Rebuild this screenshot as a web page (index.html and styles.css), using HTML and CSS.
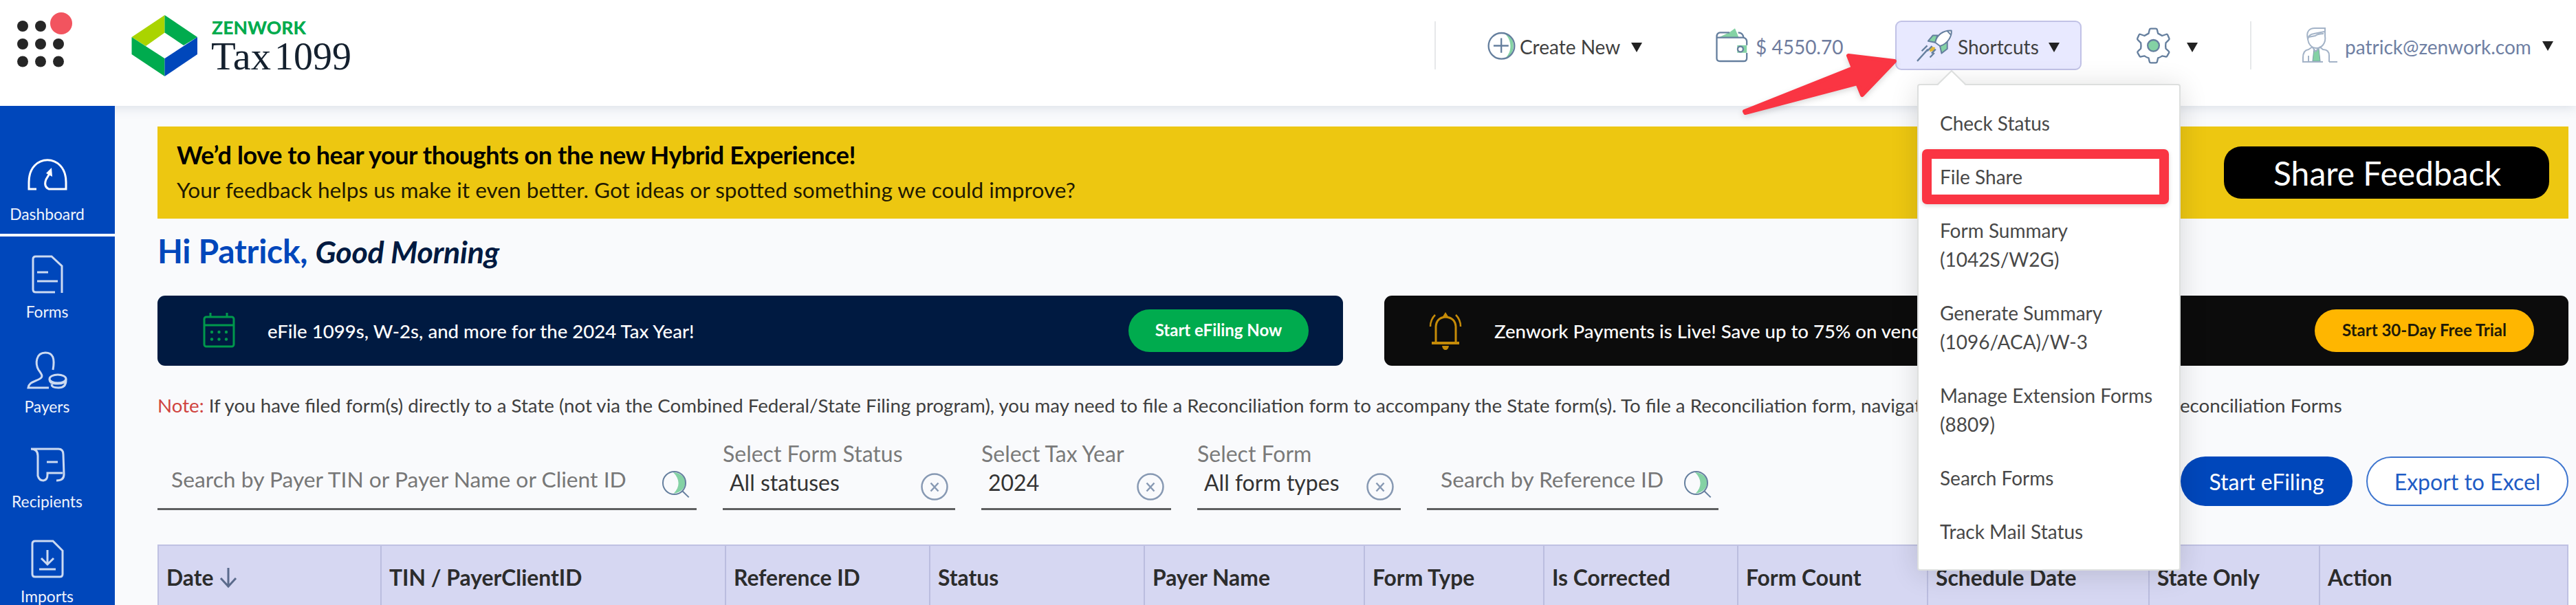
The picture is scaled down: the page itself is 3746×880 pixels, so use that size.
FILE: index.html
```
<!DOCTYPE html>
<html lang="en">
<head>
  <meta charset="UTF-8">
  <title>Tax1099 Dashboard</title>
  <link rel="stylesheet" href="styles.css">
</head>
<body>
  <header class="topbar">
    <svg class="apps" viewBox="0 0 110 110">
      <g fill="#262626">
        <circle cx="33" cy="38" r="8"/><circle cx="59" cy="38" r="8"/>
        <circle cx="33" cy="64" r="8"/><circle cx="59" cy="64" r="8"/><circle cx="85" cy="64" r="8"/>
        <circle cx="33" cy="89.500" r="8"/><circle cx="59" cy="89.500" r="8"/><circle cx="85" cy="89.500" r="8"/>
      </g>
      <circle cx="89" cy="34" r="16" fill="#f2545f"/>
    </svg>
    <svg class="logo" viewBox="0 0 340 110">
      <polygon points="49.500,22 1.500,54 22,67 49.500,47.500" fill="#aad400"/>
      <polygon points="49.500,22 97,54 77,66 49.500,47.500" fill="#00ab4e"/>
      <polygon points="1.500,54 1.500,79 49.500,111 49.500,85" fill="#00ab4e"/>
      <polygon points="97,54 97,79 49.500,111 49.500,85" fill="#0047bb"/>
      <text class="logo-zen" x="118" y="50" textLength="137" lengthAdjust="spacingAndGlyphs">ZENWORK</text>
      <text class="logo-tax" x="117" y="101" textLength="87" lengthAdjust="spacingAndGlyphs">Tax</text>
      <text class="logo-tax" x="209" y="101" textLength="112" lengthAdjust="spacingAndGlyphs">1099</text>
    </svg>

    <nav class="top-nav">
      <span class="divider"></span>
      <div class="nav-item create">
        <svg class="ico-create" viewBox="35 72 128 130" fill="none" stroke="#657f9e" stroke-width="7">
          <path d="M108 80C165 85 165 185 112 194C150 165 145 105 108 80Z" fill="#84d2a4" stroke="none"/>
          <circle cx="99" cy="138" r="57"/>
          <path d="M64 137H130M98 104V168"/>
        </svg>
        <span>Create New</span><i class="caret"></i>
      </div>
      <div class="nav-item wallet">
        <svg class="ico-wallet" viewBox="1028 60 150 160" fill="none" stroke="#657f9e" stroke-width="7">
          <path d="M1050 102L1095 80L1118 64L1134 102Z" fill="#84d2a4" stroke="none"/>
          <path d="M1128 138H1170V171H1128Z" fill="#84d2a4" stroke="none"/>
          <path d="M1094 82H1052Q1038 84 1038 100V195Q1038 208 1052 208H1156Q1170 208 1170 194V172M1170 138V120Q1168 106 1154 104H1040M1132 82Q1152 82 1156 104"/>
          <circle cx="1142" cy="155" r="12" fill="#fff"/>
        </svg>
        <span>$ 4550.70</span>
      </div>
      <div class="nav-item shortcuts">
        <svg class="ico-rocket" viewBox="140 60 160 150" fill="none" stroke="#657f9e" stroke-width="6" stroke-linejoin="round">
          <path d="M232 91H212L191 116L222 122Z" fill="#84d2a4"/>
          <path d="M275 118V150L250 170L243 138Z" fill="#84d2a4"/>
          <path d="M222 122C228 90 256 68 293 70C296 96 276 128 243 138Z" fill="#fff"/>
          <path d="M206 140L222 144L218 158L200 164L196 154Z" fill="#e0b83a" stroke="none"/>
          <path d="M275 72L290 88"/>
          <path d="M143 204L190 152M163 160L187 136M187 160L208 138M199 188L218 168M206 170L224 152" stroke-width="7"/>
        </svg>
        <span>Shortcuts</span><i class="caret"></i>

        <div class="menu">
          <svg class="menu-tip" viewBox="0 0 44 24"><path d="M1 22L21 2L41 22V24H1Z" fill="#fff"/><path d="M0 21.500L21 1L42 21.500" fill="none" stroke="#dddfde" stroke-width="2"/></svg>
          <a>Check Status</a>
          <a>File Share</a>
          <a>Form Summary<br>(1042S/W2G)</a>
          <a>Generate Summary<br>(1096/ACA)/W-3</a>
          <a>Manage Extension Forms<br>(8809)</a>
          <a>Search Forms</a>
          <a>Track Mail Status</a>
          <div class="highlight"></div>
        </div>
      </div>
      <div class="nav-item settings">
        <svg class="ico-gear" viewBox="1095 55 158 165" stroke="#657f9e" stroke-width="7" stroke-linejoin="round">
          <path fill="#fff" d="M1157 67Q1158 63 1163 63H1184Q1189 63 1190 67L1194 84Q1204 89 1212 94L1229 88Q1234 86 1236 90L1243 106Q1244 110 1240 113L1228 125Q1226 137 1228 150L1240 161Q1244 164 1242 168L1234 182Q1232 187 1227 185L1212 182Q1204 188 1194 191L1190 208Q1189 212 1184 212H1163Q1158 212 1157 208L1153 191Q1143 188 1135 182L1120 185Q1115 187 1113 182L1105 168Q1103 164 1107 161L1119 150Q1121 137 1119 125L1107 113Q1103 110 1104 106L1111 90Q1113 86 1118 88L1135 94Q1143 89 1153 84Z"/>
          <circle cx="1174" cy="137" r="25" fill="#84d2a4"/>
        </svg>
        <i class="caret"></i>
      </div>
      <span class="divider"></span>
      <div class="nav-item user">
        <svg class="ico-user" viewBox="0 0 52 52" fill="none" stroke="#a3b3c7" stroke-width="2">
          <path d="M17 31L20 35L24 31L26 49H15Z" fill="#84d2a4" stroke="#7d9bab" stroke-width="1"/>
          <path d="M8 17C5 5 11 1 18 1H33V12C35 24 27 30 21 30C13 30 9 24 8 17Q9 10 17 9L32 6M9 14L19 12Q23 9 31 9"/>
          <path d="M15 28L9 32Q1 33 1 44V50H30M39 50H51M39 50V41Q39 32 30 32L25 28M9 41V50M15 29L19 35L25 29"/>
        </svg>
        <span>patrick@zenwork.com</span><i class="caret"></i>
      </div>
    </nav>
  </header>

  <div class="layout">
    <aside class="sidebar">
      <a class="side-item active">
        <svg viewBox="0 0 60 60"><path d="M14 48H3V38C3 -5 57 -5 57 38V48H32Q24 44 28 34L34 24"/><path d="M28 25L36 17L37 30Z" fill="#fff" stroke="none"/></svg>
        <span>Dashboard</span>
      </a>
      <a class="side-item">
        <svg viewBox="0 0 60 60"><path d="M41 56H13Q9 56 9 52V8Q9 4 13 4H36L51 18V57M15 27H31M15 40H45"/></svg>
        <span>Forms</span>
      </a>
      <a class="side-item">
        <svg viewBox="0 0 60 60"><path d="M38 31C41 14 38 6 27 6C13 6 12 22 17 31C22 38 25 41 17 45C8 49 3 50 2 57H32"/><ellipse cx="45" cy="44" rx="12" ry="6"/><path d="M33 45Q33 51 42 51Q57 52 57 44M36 52Q36 57 46 57Q57 57 57 46"/></svg>
        <span>Payers</span>
      </a>
      <a class="side-item">
        <svg viewBox="0 0 60 60"><path d="M6 8Q16 8 16 18V47Q18 54 24 54Q30 53 30 46V43H52M6 8H46Q53 8 53 16L54 45Q54 54 43 54M29 27H45"/></svg>
        <span>Recipients</span>
      </a>
      <a class="side-item">
        <svg viewBox="0 0 60 60"><path d="M12 4H38L52 18V52Q52 56 48 56H12Q8 56 8 52V8Q8 4 12 4ZM30 17V37M21 29L30 38L39 29M18 45H42"/></svg>
        <span>Imports</span>
      </a>
    </aside>

    <main class="content">
      <section class="banner">
        <div>
          <h2>We’d love to hear your thoughts on the new Hybrid Experience!</h2>
          <p>Your feedback helps us make it even better. Got ideas or spotted something we could improve?</p>
        </div>
        <button class="feedback-btn">Share Feedback</button>
      </section>

      <h1 class="greeting">Hi Patrick, <em>Good Morning</em></h1>

      <section class="promos">
        <div class="promo navy">
          <svg class="promo-ico" viewBox="0 0 60 60" fill="none" stroke="#00984c" stroke-width="3">
            <rect x="8" y="10" width="43" height="43" rx="3"/><path d="M8 22H51M17 4V11M41 4V11"/>
            <g fill="#00984c" stroke="none"><circle cx="19" cy="32" r="2.200"/><circle cx="29.500" cy="32" r="2.200"/><circle cx="40" cy="32" r="2.200"/><circle cx="19" cy="42.500" r="2.200"/><circle cx="29.500" cy="42.500" r="2.200"/><circle cx="40" cy="42.500" r="2.200"/></g>
          </svg>
          <span>eFile 1099s, W-2s, and more for the 2024 Tax Year!</span>
          <button class="green-btn">Start eFiling Now</button>
        </div>
        <div class="promo black">
          <svg class="promo-ico" viewBox="0 0 60 60" fill="none" stroke="#c58b08" stroke-width="3">
            <path d="M15 47V24Q16 11 29 10Q43 11 44 24V47M9 48H49"/><path d="M9 46H49V50H9Z" fill="#c58b08" stroke="none"/>
            <path d="M29 3L34 11H24Z" fill="#c58b08" stroke="none"/><path d="M24 52H34Q33 58 29 58Q25 58 24 52Z" fill="#c58b08" stroke="none"/>
            <path d="M14 7Q7 14 7 24M44 7Q51 14 51 24" stroke-width="2.500"/>
          </svg>
          <span>Zenwork Payments is Live! Save up to 75% on vendor</span>
          <button class="yellow-btn">Start 30-Day Free Trial</button>
        </div>
      </section>

      <p class="note"><b>Note:</b> If you have filed form(s) directly to a State (not via the Combined Federal/State Filing program), you may need to file a Reconciliation form to accompany the State form(s). To file a Reconciliation form, naviga<span class="note-path">te to Forms &gt; State Filings &gt; R</span>econciliation Forms</p>

      <section class="filters">
        <div class="field search payer">
          <span>Search by Payer TIN or Payer Name or Client ID</span>
          <svg class="ico-search" viewBox="770 65 130 130" fill="none" stroke="#657f9e" stroke-width="6"><path d="M824 80C895 85 895 165 826 173C855 145 855 110 824 80Z" fill="#84d2a4" stroke="none"/><circle cx="829" cy="127" r="50"/><path d="M864 162L893 190"/></svg>
        </div>
        <div class="field status">
          <label>Select Form Status</label>
          <div class="value">All statuses<svg class="ico-clear" viewBox="0 0 40 40"><circle cx="20" cy="20" r="18.500"/><path d="M14.500 14.500L25.500 26.500M25.500 14.500L14.500 26.500"/></svg></div>
        </div>
        <div class="field year">
          <label>Select Tax Year</label>
          <div class="value">2024<svg class="ico-clear" viewBox="0 0 40 40"><circle cx="20" cy="20" r="18.500"/><path d="M14.500 14.500L25.500 26.500M25.500 14.500L14.500 26.500"/></svg></div>
        </div>
        <div class="field form">
          <label>Select Form</label>
          <div class="value">All form types<svg class="ico-clear" viewBox="0 0 40 40"><circle cx="20" cy="20" r="18.500"/><path d="M14.500 14.500L25.500 26.500M25.500 14.500L14.500 26.500"/></svg></div>
        </div>
        <div class="field search reference">
          <span>Search by Reference ID</span>
          <svg class="ico-search" viewBox="770 65 130 130" fill="none" stroke="#657f9e" stroke-width="6"><path d="M824 80C895 85 895 165 826 173C855 145 855 110 824 80Z" fill="#84d2a4" stroke="none"/><circle cx="829" cy="127" r="50"/><path d="M864 162L893 190"/></svg>
        </div>
        <div class="actions">
          <button class="primary-btn">Start eFiling</button>
          <button class="outline-btn">Export to Excel</button>
        </div>
      </section>

      <div class="table-head">
        <div>Date <svg class="ico-sort" viewBox="0 0 26 30"><path d="M13 1V27M2 16L13 28L24 16" fill="none" stroke="#5b6b8c" stroke-width="3"/></svg></div>
        <div>TIN / PayerClientID</div>
        <div>Reference ID</div>
        <div>Status</div>
        <div>Payer Name</div>
        <div>Form Type</div>
        <div>Is Corrected</div>
        <div>Form Count</div>
        <div>Schedule Date</div>
        <div>State Only</div>
        <div>Action</div>
      </div>
    </main>
  </div>

  <svg class="pointer" viewBox="0 0 240 100">
    <path d="M17 62L175 -1L168 -19L235 -11L188 38L181 21L18 64Z" transform="translate(0 20)" fill="#fa3543" stroke="#fa3543" stroke-width="6" stroke-linejoin="round"/>
  </svg>
</body>
</html>
```
FILE: styles.css
```
* {
  box-sizing: border-box;
}
body {
  margin: 0;
  height: 880px;
  overflow: hidden;
  background: #f9fafc;
  color: #3f3f3f;
  font-family: Lato, sans-serif;
  font-size: 28px;
  position: relative;
}
h1, h2, p {
  margin: 0;
}
svg {
  display: block;
  flex: none;
  overflow: visible;
}
button {
  border: none;
  padding: 0;
  font-family: inherit;
  flex: none;
}

/* top bar */
.topbar {
  position: relative;
  z-index: 2;
  display: flex;
  align-items: flex-start;
  height: 154px;
  background: #fff;
  box-shadow: 0 2px 16px rgba(60, 85, 120, 0.17);
}
.apps {
  width: 110px;
  height: 110px;
}
.logo {
  width: 340px;
  height: 110px;
  margin-left: 80px;
}
.logo-zen {
  font: 900 27px Lato, sans-serif;
  fill: #00ab4e;
}
.logo-tax {
  font: 57px "Liberation Serif", serif;
  fill: #14202e;
}
.top-nav {
  display: flex;
  align-items: center;
  height: 132px;
  margin-left: auto;
  padding-right: 33px;
}
.divider {
  width: 2px;
  height: 70px;
  background: #e6e8ea;
}
.nav-item {
  display: flex;
  align-items: center;
  flex: none;
  height: 72px;
  line-height: 34px;
  white-space: nowrap;
}
.nav-item > span {
  padding-top: 3px;
}
.caret {
  margin-left: auto;
  margin-top: 5px;
  border: 8.5px solid transparent;
  border-top: 14px solid #222;
  border-bottom: 0;
}
.create {
  width: 226px;
  margin-left: 74px;
}
.ico-create {
  width: 43px;
  height: 43px;
  margin-right: 5px;
}
.wallet {
  width: 187px;
  margin-left: 105px;
  color: #6f7c9e;
}
.ico-wallet {
  width: 50px;
  height: 53px;
  margin-right: 10px;
}
.shortcuts {
  position: relative;
  width: 271px;
  margin-left: 76px;
  padding: 0 30px 0 29px;
  background: #e8e9ff;
  border: 2px solid #c1c2e6;
  border-radius: 9px;
}
.ico-rocket {
  width: 53px;
  height: 50px;
  margin-right: 7px;
}
.settings {
  width: 91px;
  margin-left: 78px;
}
.ico-gear {
  width: 53px;
  height: 55px;
}
.settings + .divider {
  margin-left: 76px;
}
.user {
  width: 365px;
  margin-left: 74px;
  color: #6f80a3;
}
.user .caret {
  margin-top: 1px;
}
.ico-user {
  width: 52px;
  height: 52px;
  margin-right: 10px;
}

/* shortcuts dropdown */
.menu {
  position: absolute;
  left: 30px;
  top: 90px;
  width: 383px;
  padding: 16px 0;
  background: #fff;
  border: 2px solid #dddfde;
  border-radius: 4px;
  box-shadow: 0 4px 40px rgba(0, 0, 0, 0.14);
}
.menu a {
  display: block;
  padding: 18px 0 18px 31px;
  line-height: 42px;
  color: #484848;
}
.menu-tip {
  position: absolute;
  left: 27px;
  top: -22px;
  width: 44px;
  height: 24px;
}
.highlight {
  position: absolute;
  left: 5px;
  top: 93px;
  width: 359px;
  height: 80px;
  border: 14px solid #fa3543;
  border-radius: 7px;
  box-shadow: 0 2px 6px rgba(0, 0, 0, 0.15);
}
.pointer {
  position: absolute;
  z-index: 3;
  left: 2520px;
  top: 80px;
  width: 240px;
  height: 100px;
  filter: drop-shadow(0 3px 4px rgba(0, 0, 0, 0.15));
}

/* sidebar */
.layout {
  display: flex;
  height: 726px;
}
.sidebar {
  position: relative;
  z-index: 3;
  width: 167px;
  flex: none;
  background: #0047bb;
}
.side-item {
  display: flex;
  flex-direction: column;
  align-items: center;
  height: 138px;
  padding: 25px 30px 0 0;
  gap: 9px;
  color: #f0f4fb;
  font-size: 22.8px;
  line-height: 30px;
}
.side-item svg {
  width: 60px;
  height: 60px;
  fill: none;
  stroke: #ccdaf1;
  stroke-width: 3;
}
.side-item.active {
  height: 190px;
  padding-top: 73px;
  border-bottom: 4px solid #fff;
}
.side-item.active svg {
  stroke: #fff;
}

/* content */
.content {
  flex: 1;
  min-width: 0;
  padding: 30px 11px 0 62px;
}
.banner {
  display: flex;
  justify-content: space-between;
  align-items: center;
  height: 134px;
  padding: 0 28px;
  background: #edc711;
  color: #000;
}
.banner h2 {
  font-size: 36px;
  line-height: 51px;
  letter-spacing: -0.42px;
}
.banner p {
  font-size: 31.6px;
  line-height: 51px;
  color: #1f1a02;
}
.feedback-btn {
  width: 473px;
  height: 76px;
  padding-left: 2px;
  border-radius: 25px;
  background: #000;
  color: #fff;
  font-size: 48px;
}
.greeting {
  height: 112px;
  line-height: 93px;
  font-size: 48px;
  letter-spacing: -0.3px;
  color: #0047bb;
}
.greeting em {
  font-size: 44.8px;
  color: #001a41;
}
.promos {
  display: flex;
  justify-content: space-between;
}
.promo {
  display: flex;
  align-items: center;
  height: 102px;
  padding: 0 50px 0 59px;
  border-radius: 11px;
  color: #fff;
  font-size: 27.6px;
  font-weight: 500;
  white-space: nowrap;
}
.promo button {
  height: 62px;
  margin-left: auto;
  padding-bottom: 3px;
  border-radius: 31px;
  font-size: 24px;
  font-weight: 700;
}
.navy {
  width: 1724px;
  background: #001a41;
}
.black {
  width: 1722px;
  background: #0c0c0c;
}
.promo-ico {
  width: 60px;
  height: 60px;
  margin-left: 1px;
  margin-right: 40px;
}
.promo .green-btn {
  width: 262px;
  background: #00ab4e;
  color: #fff;
}
.promo .yellow-btn {
  width: 319px;
  background: #ffb600;
  color: #201a08;
}
.note {
  height: 108px;
  line-height: 115px;
  font-size: 27.69px;
  white-space: nowrap;
}
.note b {
  font-weight: 400;
  color: #d0433f;
}
.note-path {
  display: inline-block;
  width: 386px;
}

/* filters */
.filters {
  display: flex;
  gap: 38px;
  height: 102px;
  font-size: 32px;
  white-space: nowrap;
}
.field {
  flex: none;
  border-bottom: 3px solid #5e5f60;
}
.field label {
  display: block;
  line-height: 40px;
  color: #7a7a7a;
}
.payer { width: 784px; }
.status { width: 338px; }
.year { width: 276px; }
.form { width: 296px; }
.reference { width: 424px; }
.search {
  display: flex;
  align-items: center;
  justify-content: space-between;
  padding: 14px 9px 0 20px;
  color: #777;
  font-size: 31.8px;
}
.ico-search {
  width: 43px;
  height: 43px;
  margin-top: 14px;
}
.value {
  display: flex;
  justify-content: space-between;
  padding: 0 10px;
  line-height: 43px;
  color: #333;
}
.ico-clear {
  width: 40px;
  height: 40px;
  margin-top: 8px;
  fill: none;
  stroke: #8799b3;
  stroke-width: 2.5;
}
.actions {
  display: flex;
  gap: 20px;
  margin-left: auto;
  padding-top: 24px;
}
.actions button {
  height: 72px;
  border-radius: 36px;
  font-size: 32px;
}
.actions .primary-btn {
  width: 250px;
  background: #0047bb;
  color: #fff;
}
.actions .outline-btn {
  width: 294px;
  background: #fff;
  border: 2px solid #3f76cf;
  color: #1f5cc5;
}

/* table header */
.table-head {
  display: grid;
  grid-template-columns: 324px 501px 297px 312px 320px 261px 282px 276px 322px 248px 1fr;
  height: 96px;
  margin-top: 50px;
  border: 2px solid #bfc1e2;
  background: #d6d7f2;
  color: #2c2c2c;
  font-size: 31.8px;
  font-weight: 700;
}
.table-head div {
  display: flex;
  align-items: center;
  padding-left: 11px;
  border-right: 2px solid #bbbddf;
}
.table-head div:last-child {
  border-right: 0;
}
.ico-sort {
  width: 26px;
  height: 30px;
  margin-left: 9px;
}
```
